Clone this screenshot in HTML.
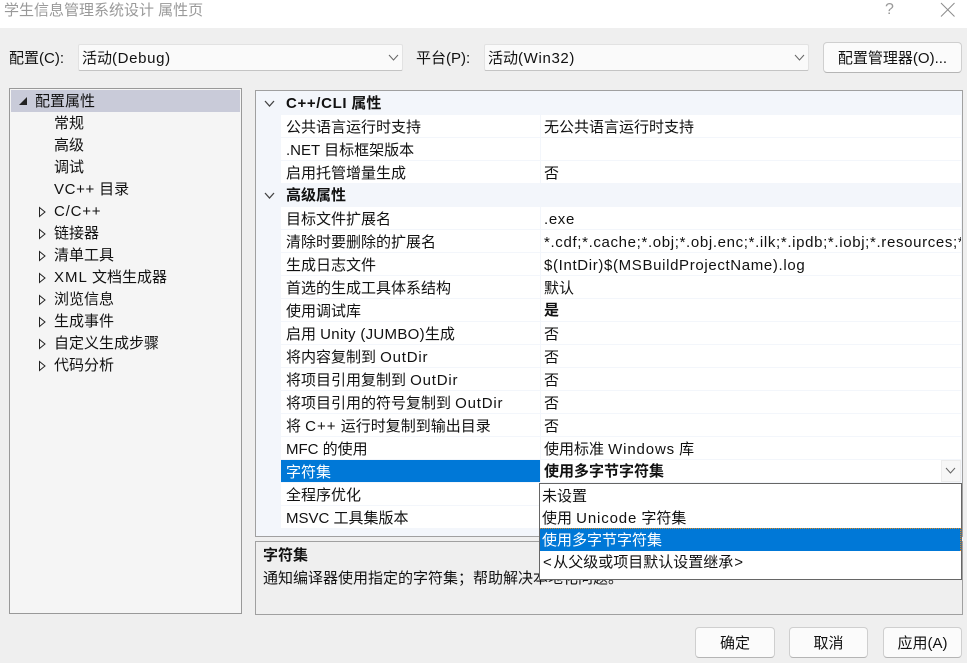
<!DOCTYPE html>
<html lang="zh-CN"><head><meta charset="utf-8"><title>属性页</title>
<style>
html,body{margin:0;padding:0}
body{width:967px;height:663px;overflow:hidden;position:relative;background:#efefef;font-family:"Liberation Sans","Noto Sans CJK SC",sans-serif;font-size:15px;color:#111}
div,svg{position:absolute;box-sizing:border-box}
.t{white-space:nowrap;line-height:22px;height:22px;margin-top:1px}
.b{font-weight:bold}
.x{letter-spacing:.65px}
.combo{background:#fafafa;border:1px solid #e2e2e2;border-bottom-color:#c4c4c4;border-radius:2px;height:27px;top:44px}
.btn{background:#fbfbfb;border:1px solid #cfcfcf;border-bottom-color:#b5b5b5;border-radius:4px;text-align:center;line-height:31px;white-space:nowrap}
.row{left:281px;width:680px;height:22px;background:#fff}
.l{left:286px;margin-top:2px}.r{left:544px;margin-top:2px}
.t.b{margin-top:1px}
</style></head><body>
<div style="left:0;top:0;width:967px;height:28px;background:#fff"></div>
<div class="t" style="left:4px;top:-1px;color:#999">学生信息管理系统设计 属性页</div>
<div class="t" style="left:885px;top:-2px;color:#999;font-size:16px">?</div>
<svg style="left:940px;top:2px" width="16" height="16"><path d="M1 1L14.500 14.500M14.500 1L1 14.500" stroke="#8c8c8c" stroke-width="1" fill="none"/></svg>

<div class="t" style="left:9px;top:47px">配置(C):</div>
<div class="combo" style="left:78px;width:325px"></div>
<div class="t" style="left:82px;top:47px">活动<span class="x">(Debug)</span></div>
<svg style="left:388px;top:54px" width="12" height="8"><path d="M1 1L5.500 6L10 1" stroke="#666" fill="none"/></svg>
<div class="t" style="left:416px;top:47px">平台(P):</div>
<div class="combo" style="left:484px;width:325px"></div>
<div class="t" style="left:488px;top:47px">活动<span class="x">(Win32)</span></div>
<svg style="left:794px;top:54px" width="12" height="8"><path d="M1 1L5.500 6L10 1" stroke="#666" fill="none"/></svg>
<div class="btn" style="left:823px;top:42px;width:139px;height:31px">配置管理器(O)...</div>

<!-- tree -->
<div style="left:9px;top:88px;width:233px;height:526px;background:#f5f5f5;border:1px solid #999"></div>
<div style="left:11px;top:90px;width:229px;height:22px;background:#c9cbd9"></div>
<svg style="left:18px;top:95px" width="10" height="12"><path d="M1 10H9V2Z" fill="#222"/></svg>
<div class="t" style="left:35px;top:90px">配置属性</div>
<div class="t" style="left:54px;top:112px">常规</div>
<div class="t" style="left:54px;top:134px">高级</div>
<div class="t" style="left:54px;top:156px">调试</div>
<div class="t" style="left:54px;top:178px"><span class="x">VC++</span> 目录</div>
<div class="t" style="left:54px;top:200px"><span style="letter-spacing:.8px">C/C++</span></div>
<div class="t" style="left:54px;top:222px">链接器</div>
<div class="t" style="left:54px;top:244px">清单工具</div>
<div class="t" style="left:54px;top:266px"><span style="letter-spacing:1px">XML</span> 文档生成器</div>
<div class="t" style="left:54px;top:288px">浏览信息</div>
<div class="t" style="left:54px;top:310px">生成事件</div>
<div class="t" style="left:54px;top:332px">自定义生成步骤</div>
<div class="t" style="left:54px;top:354px">代码分析</div>
<svg style="left:38px;top:201px" width="10" height="176"><g fill="none" stroke="#222"><path d="M1.500 6.500V15.500L7 11Z"/><path d="M1.500 28.500V37.500L7 33Z"/><path d="M1.500 50.500V59.500L7 55Z"/><path d="M1.500 72.500V81.500L7 77Z"/><path d="M1.500 94.500V103.500L7 99Z"/><path d="M1.500 116.500V125.500L7 121Z"/><path d="M1.500 138.500V147.500L7 143Z"/><path d="M1.500 160.500V169.500L7 165Z"/></g></svg>

<!-- grid -->
<div style="left:255px;top:90px;width:708px;height:447px;background:#f3f6fb;border:1px solid #a0a0a0"></div>
<div class="row" style="top:115px"></div><div class="row" style="top:138px"></div><div class="row" style="top:161px"></div>
<div class="row" style="top:207px"></div><div class="row" style="top:230px"></div><div class="row" style="top:253px"></div><div class="row" style="top:276px"></div><div class="row" style="top:299px"></div><div class="row" style="top:322px"></div><div class="row" style="top:345px"></div><div class="row" style="top:368px"></div><div class="row" style="top:391px"></div><div class="row" style="top:414px"></div><div class="row" style="top:437px"></div><div class="row" style="top:460px"></div><div class="row" style="top:483px"></div><div class="row" style="top:506px"></div>
<div style="left:540px;top:115px;width:1px;height:68px;background:#f3f6fb"></div>
<div style="left:540px;top:207px;width:1px;height:322px;background:#f3f6fb"></div>
<div style="left:281px;top:460px;width:259px;height:22px;background:#0078d7"></div>
<svg style="left:264px;top:100px" width="12" height="8"><path d="M1 1L5.500 6L10 1" stroke="#444" stroke-width="1.300" fill="none"/></svg>
<svg style="left:264px;top:192px" width="12" height="8"><path d="M1 1L5.500 6L10 1" stroke="#444" stroke-width="1.300" fill="none"/></svg>
<div class="t b l" style="top:92px"><span class="x">C++/CLI</span> 属性</div>
<div class="t l" style="top:115px">公共语言运行时支持</div><div class="t r" style="top:115px">无公共语言运行时支持</div>
<div class="t l" style="top:138px">.NET 目标框架版本</div>
<div class="t l" style="top:161px">启用托管增量生成</div><div class="t r" style="top:161px">否</div>
<div class="t b l" style="top:184px">高级属性</div>
<div class="t l" style="top:207px">目标文件扩展名</div><div class="t r x" style="top:207px">.exe</div>
<div class="t l" style="top:230px">清除时要删除的扩展名</div><div class="t r x" style="top:230px;width:417px;overflow:hidden">*.cdf;*.cache;*.obj;*.obj.enc;*.ilk;*.ipdb;*.iobj;*.resources;*.tlb</div>
<div class="t l" style="top:253px">生成日志文件</div><div class="t r x" style="top:253px">$(IntDir)$(MSBuildProjectName).log</div>
<div class="t l" style="top:276px">首选的生成工具体系结构</div><div class="t r" style="top:276px">默认</div>
<div class="t l" style="top:299px">使用调试库</div><div class="t r b" style="top:299px">是</div>
<div class="t l" style="top:322px">启用 <span style="letter-spacing:.3px">Unity (JUMBO)</span>生成</div><div class="t r" style="top:322px">否</div>
<div class="t l" style="top:345px">将内容复制到 <span style="letter-spacing:.8px">OutDir</span></div><div class="t r" style="top:345px">否</div>
<div class="t l" style="top:368px">将项目引用复制到 <span style="letter-spacing:.8px">OutDir</span></div><div class="t r" style="top:368px">否</div>
<div class="t l" style="top:391px">将项目引用的符号复制到 <span style="letter-spacing:.8px">OutDir</span></div><div class="t r" style="top:391px">否</div>
<div class="t l" style="top:414px">将 <span style="letter-spacing:1px">C++</span> 运行时复制到输出目录</div><div class="t r" style="top:414px">否</div>
<div class="t l" style="top:437px">MFC 的使用</div><div class="t r" style="top:437px">使用标准 <span style="letter-spacing:.85px">Windows</span> 库</div>
<div class="t l" style="top:460px;color:#fff">字符集</div><div class="t r b" style="top:460px">使用多字节字符集</div>
<div class="t l" style="top:483px">全程序优化</div>
<div class="t l" style="top:506px">MSVC 工具集版本</div>
<div style="left:941px;top:460px;width:20px;height:22px;background:#f7f7f7;border:1px solid #ececec"></div>
<svg style="left:945px;top:467px" width="12" height="8"><path d="M1 1L5.500 6L10 1" stroke="#666" fill="none"/></svg>

<!-- description -->
<div style="left:255px;top:541px;width:708px;height:74px;background:#efefef;border:1px solid #a0a0a0"></div>
<div class="t b" style="left:263px;top:544px">字符集</div>
<div class="t" style="left:263px;top:567px">通知编译器使用指定的字符集；帮助解决本地化问题。</div>

<!-- dropdown -->
<div style="left:539px;top:483px;width:423px;height:97px;background:#fff;border:1px solid #666"></div>
<div style="left:540px;top:528px;width:421px;height:23px;background:#0078d7;border-top:1px dotted #e08a20;border-right:1px dotted #e08a20"></div>
<div class="t" style="left:542px;top:485px">未设置</div>
<div class="t" style="left:542px;top:507px">使用 <span style="letter-spacing:.85px">Unicode</span> 字符集</div>
<div class="t" style="left:542px;top:529px;color:#fff">使用多字节字符集</div>
<div class="t" style="left:543px;top:551px"><span style="letter-spacing:1.5px">&lt;</span>从父级或项目默认设置继承<span style="margin-left:1px">&gt;</span></div>

<!-- buttons -->
<div class="btn" style="left:695px;top:627px;width:80px;height:31px">确定</div>
<div class="btn" style="left:789px;top:627px;width:79px;height:31px">取消</div>
<div class="btn" style="left:883px;top:627px;width:79px;height:31px">应用(A)</div>
</body></html>
